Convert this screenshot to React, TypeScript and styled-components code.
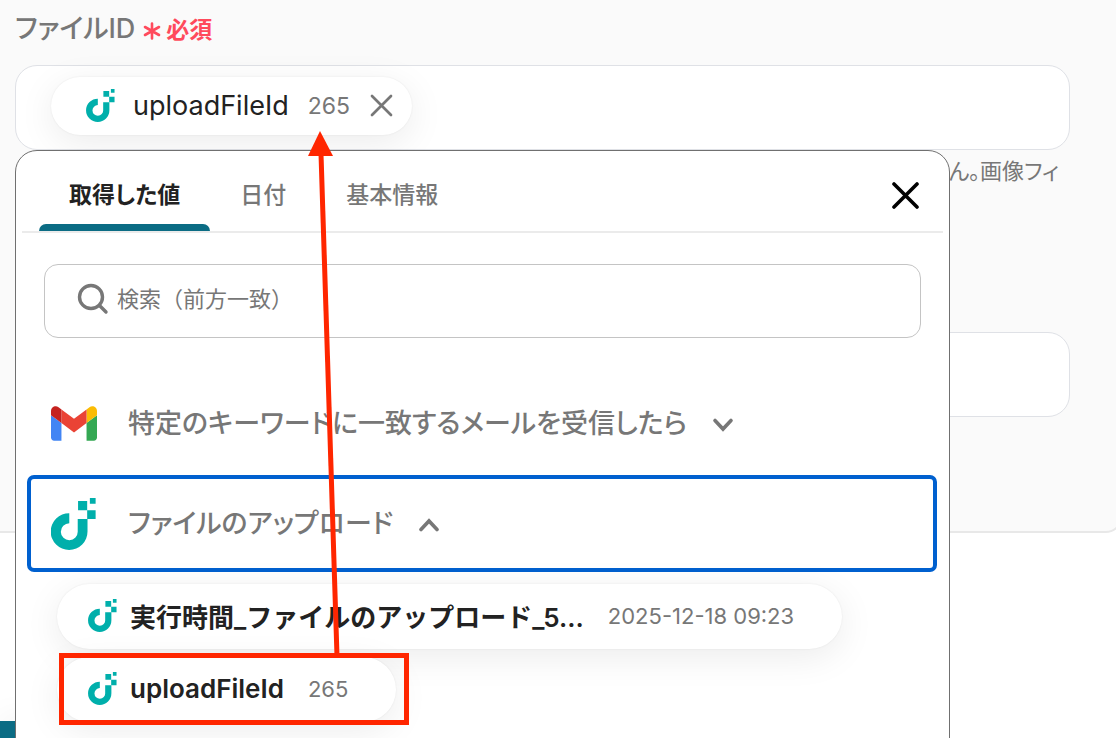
import React from "react";
import styled, { createGlobalStyle, css } from "styled-components";

const GlobalStyle = createGlobalStyle`
  *, *::before, *::after { box-sizing: border-box; }
  body {
    margin: 0;
    background: #fff;
    color: #222;
    font-family: Inter, "Noto Sans CJK JP", sans-serif;
    font-feature-settings: "palt";
  }
  button, input {
    font: inherit;
    font-feature-settings: inherit;
    color: inherit;
    border: 0;
    background: none;
    padding: 0;
    margin: 0;
  }
`;

const Page = styled.div`
  position: relative;
  height: 100vh;
  overflow: hidden;
  display: flex;
  flex-direction: column;
  justify-content: space-between;
`;

const SettingsCard = styled.section`
  flex: none;
  margin-right: -6px;
  padding: 8px 50px 114px 15px;
  background: #fafafa;
  border: solid #e8e8e8;
  border-width: 0 2px 2px 0;
  border-bottom-right-radius: 16px;
`;

const FieldLabel = styled.div`
  display: flex;
  align-items: center;
  gap: 8px;
  height: 36px;
  margin-bottom: 21px;
  color: #777;
  font-size: 27px;
  font-weight: 500;
`;

const Required = styled.span`
  display: flex;
  align-items: center;
  gap: 5px;
  padding-top: 4px;
  color: #ff4a5c;
  font-size: 23px;
  font-weight: 600;
  svg {
    margin-top: 6px;
  }
`;

const FieldAnchor = styled.div`
  position: relative;
`;

const Field = styled.div`
  display: flex;
  align-items: center;
  height: 85px;
  padding: 0 35px 4px;
  background: #fff;
  border: 1px solid #dfe1e6;
  border-radius: 22px;
`;

const Help = styled.p`
  margin: 6px 11px 144px;
  height: 32px;
  line-height: 30px;
  color: #777;
  font-size: 22px;
  text-align: right;
  white-space: nowrap;
`;

const Popover = styled.div`
  position: absolute;
  z-index: 2;
  top: 85px;
  left: 0;
  width: 100%;
  max-width: 935px;
  height: 100vh;
  background: #fff;
  border: 1px solid #707070;
  border-radius: 22px;
`;

const TabBar = styled.div`
  display: flex;
  align-items: stretch;
  height: 82px;
  margin: 0 6px;
  padding: 0 24px 0 17px;
  border-bottom: 2px solid #ebebeb;
`;

const Tab = styled.button<{ $active?: boolean }>`
  position: relative;
  padding: 4px 30px 0;
  color: #777;
  font-size: 23px;
  font-weight: 500;
  ${(p) =>
    p.$active &&
    css`
      color: #222;
      font-weight: 600;
      &::after {
        content: "";
        position: absolute;
        left: 0;
        right: 0;
        bottom: 0;
        height: 7px;
        border-radius: 7px 7px 0 0;
        background: #0b6c84;
      }
    `}
`;

const CloseButton = styled.button`
  display: flex;
  align-items: center;
  margin-left: auto;
  padding-top: 8px;
`;

const SearchBox = styled.label`
  display: flex;
  align-items: center;
  gap: 8px;
  height: 74px;
  margin: 31px 28px 0;
  padding: 0 32px 4px;
  border: 1px solid #c4c4c4;
  border-radius: 14px;
`;

const SearchInput = styled.input`
  flex: 1;
  outline: none;
  font-size: 22px;
  font-feature-settings: normal;
  &::placeholder {
    color: #777;
    opacity: 1;
  }
`;

const Groups = styled.div`
  display: flex;
  flex-direction: column;
  gap: 3px;
  margin: 37px 12px 0 11px;
`;

const Group = styled.button<{ $focused?: boolean }>`
  display: flex;
  align-items: center;
  height: 97px;
  padding: 0 20px;
  border: 4px solid ${(p) => (p.$focused ? "#0060cf" : "transparent")};
  border-radius: 7px;
  color: #777;
  font-size: 27px;
  font-weight: 500;
`;

const GroupIcon = styled.span`
  display: flex;
  width: 77px;
`;

const GroupName = styled.span`
  margin-right: 25px;
  padding-bottom: 4px;
`;

const Outputs = styled.div`
  display: flex;
  flex-direction: column;
  align-items: flex-start;
  gap: 8px;
  padding: 12px 41px;
`;

const Chip = styled.div<{ $selected?: boolean }>`
  display: flex;
  align-items: center;
  height: ${(p) => (p.$selected ? 58 : 65)}px;
  padding: ${(p) => (p.$selected ? "0 19px 0 35px" : "0 48px 2px 31px")};
  border-radius: 33px;
  background: #fff;
  box-shadow: 0 8px 36px rgba(0, 0, 0, 0.08), 0 0 2px rgba(0, 0, 0, 0.08);
  white-space: nowrap;
`;

const ChipName = styled.span<{ $selected?: boolean }>`
  max-width: 470px;
  margin: 0 ${(p) => (p.$selected ? "19px 0 18px" : "24px 0 13px")};
  overflow: hidden;
  text-overflow: ellipsis;
  font-size: ${(p) => (p.$selected ? 27 : 26)}px;
  font-weight: ${(p) => (p.$selected ? 400 : 600)};
  font-feature-settings: normal;
`;

const ChipValue = styled.span<{ $selected?: boolean }>`
  color: #777;
  font-size: ${(p) => (p.$selected ? 23 : 22)}px;
`;

const RemoveButton = styled.button`
  display: flex;
  margin-left: 20px;
`;

const Footer = styled.footer`
  flex: none;
  display: flex;
`;

const SaveButton = styled.button`
  width: 300px;
  height: 17px;
  background: #0b6c84;
  box-shadow: 0 0 32px rgba(0, 0, 0, 0.08);
`;

const Annotation = styled.svg`
  position: absolute;
  z-index: 3;
  top: 0;
  left: 0;
  pointer-events: none;
`;

const UploadIcon = ({ width, height }: { width: number; height: number }) => (
  <svg width={width} height={height} viewBox="0 0 133 154" fill="#00afab" aria-hidden="true">
    <path d="M54 45A54.500 54.500 0 1 0 108 99V62H79V99A25 25 0 1 1 54 75Z" />
    <path d="M115 0h17v17h-17zM80 9h27v27h25v26h-25V36H80z" />
  </svg>
);

const GmailIcon = () => (
  <svg width="46" height="35" viewBox="52 42 88 66" aria-hidden="true">
    <path fill="#4285f4" d="M58 108h14V74L52 59v43c0 3.32 2.69 6 6 6" />
    <path fill="#34a853" d="M120 108h14c3.32 0 6-2.69 6-6V59l-20 15" />
    <path fill="#fbbc04" d="M120 48v26l20-15v-8c0-7.42-8.47-11.65-14.4-7.2" />
    <path fill="#ea4335" d="M72 74V48l24 18 24-18v26L96 92" />
    <path fill="#c5221f" d="M52 51v8l20 15V48l-5.600-4.200c-5.940-4.450-14.400-.22-14.400 7.200" />
  </svg>
);

const Cross = ({ size, width, color }: { size: number; width: number; color: string }) => (
  <svg width={size} height={size} viewBox={`0 0 ${size} ${size}`} stroke={color} strokeWidth={width} strokeLinecap="round" aria-hidden="true">
    <path d={`M2 2L${size - 2} ${size - 2}M${size - 2} 2L2 ${size - 2}`} />
  </svg>
);

const Chevron = ({ up }: { up?: boolean }) => (
  <svg width="22" height="16" viewBox="0 0 22 16" fill="none" stroke="#777" strokeWidth="3.6" strokeLinecap="round" aria-hidden="true">
    <path d={up ? "M3 13.500L11 5L19 13.500" : "M3 4.500L11 13L19 4.500"} />
  </svg>
);

export default function App() {
  return (
    <Page>
      <GlobalStyle />
      <SettingsCard>
        <FieldLabel>
          ファイルID
          <Required>
            <svg width="18" height="18" viewBox="0 0 18 18" stroke="#ff4a5c" strokeWidth="2.6" strokeLinecap="round" aria-hidden="true">
              <path d="M9 1.500V16.500M2 5L16 13M16 5L2 13" />
            </svg>
            必須
          </Required>
        </FieldLabel>
        <FieldAnchor>
          <Field>
            <Chip $selected>
              <UploadIcon width={29} height={33} />
              <ChipName $selected>uploadFileId</ChipName>
              <ChipValue $selected>265</ChipValue>
              <RemoveButton aria-label="削除">
                <Cross size={23} width={2.7} color="#777" />
              </RemoveButton>
            </Chip>
          </Field>
          <Popover role="dialog">
            <TabBar role="tablist">
              <Tab role="tab" aria-selected $active>取得した値</Tab>
              <Tab role="tab">日付</Tab>
              <Tab role="tab">基本情報</Tab>
              <CloseButton aria-label="閉じる">
                <Cross size={27} width={3.6} color="#000" />
              </CloseButton>
            </TabBar>
            <SearchBox>
              <svg width="32" height="32" viewBox="0 0 32 32" fill="none" stroke="#777" strokeWidth="3.4" strokeLinecap="round" aria-hidden="true">
                <circle cx="14" cy="14" r="11.500" />
                <path d="M22.500 22.500L29 29" />
              </svg>
              <SearchInput type="search" aria-label="検索" placeholder="検索（前方一致）" />
            </SearchBox>
            <Groups>
              <Group>
                <GroupIcon><GmailIcon /></GroupIcon>
                <GroupName>特定のキーワードに一致するメールを受信したら</GroupName>
                <Chevron />
              </Group>
              <Group $focused>
                <GroupIcon><UploadIcon width={45} height={52} /></GroupIcon>
                <GroupName>ファイルのアップロード</GroupName>
                <Chevron up />
              </Group>
            </Groups>
            <Outputs>
              <Chip>
                <UploadIcon width={29} height={33} />
                <ChipName>実行時間_ファイルのアップロード_5...</ChipName>
                <ChipValue>2025-12-18 09:23</ChipValue>
              </Chip>
              <Chip>
                <UploadIcon width={29} height={33} />
                <ChipName>uploadFileId</ChipName>
                <ChipValue>265</ChipValue>
              </Chip>
            </Outputs>
          </Popover>
        </FieldAnchor>
        <Help>ん。画像フィ</Help>
        <Field />
      </SettingsCard>
      <Footer>
        <SaveButton aria-label="保存" />
      </Footer>
      <Annotation width="420" height="738" viewBox="0 0 420 738" fill="none" aria-hidden="true">
        <rect x="61.500" y="655.500" width="345" height="67" stroke="#ff2600" strokeWidth="5" />
        <path d="M321 154L337 656" stroke="#ff2600" strokeWidth="5" />
        <path d="M320 131L333 156H308Z" fill="#ff2600" />
      </Annotation>
    </Page>
  );
}
